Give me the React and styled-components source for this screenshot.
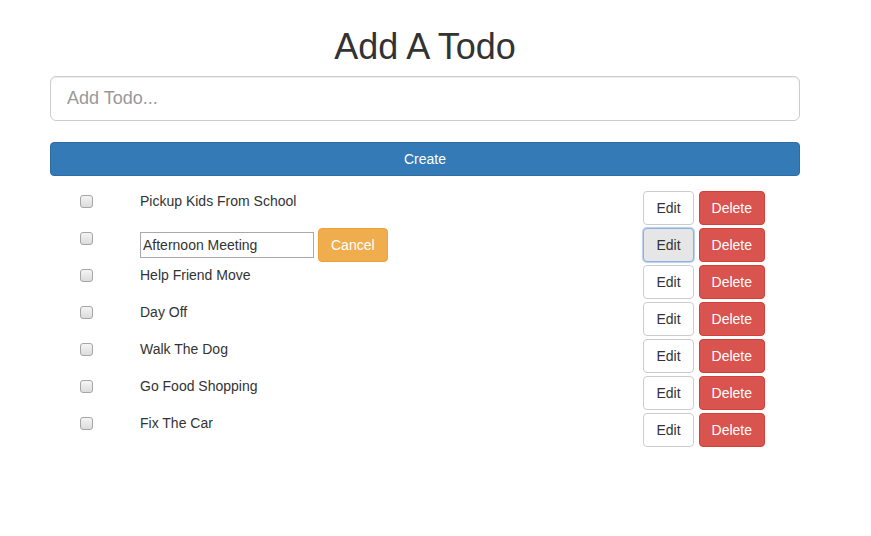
import React, {useState} from 'react';
import styled, {createGlobalStyle, css} from "styled-components";

const GlobalStyle = createGlobalStyle`
    body {
        margin: 0;
        background: #fff;
        font-family: "Liberation Sans", Arial, sans-serif;
        font-size: 14px;
        line-height: 20px;
        color: #333;
    }
    * {
        box-sizing: border-box;
    }
`;

const Container = styled.div`
    width: 750px;
    margin-left: 50px;
`;

const Title = styled.h1`
    margin: 27px 0 9px;
    font-size: 36px;
    font-weight: 400;
    line-height: 1.1;
    text-align: center;
    color: #333;
`;

const TodoInput = styled.input`
    display: block;
    width: 100%;
    height: 45px;
    padding: 10px 16px;
    font-family: inherit;
    font-size: 18px;
    color: #555;
    border: 1px solid #ccc;
    border-radius: 6px;
    box-shadow: inset 0 1px 1px rgba(0, 0, 0, .075);
    outline: none;

    &::placeholder {
        color: #999;
    }
`;

const CreateButton = styled.button`
    display: block;
    width: 100%;
    height: 34px;
    margin-top: 21px;
    font-family: inherit;
    font-size: 14px;
    color: #fff;
    background: #337ab7;
    border: 1px solid #2e6da4;
    border-radius: 4px;
`;

const List = styled.div`
    display: flex;
    flex-direction: column;
    gap: 3px;
    margin-top: 15px;
`;

const Row = styled.div`
    display: grid;
    grid-template-columns: 60px 1fr auto;
    align-items: start;
    padding: 0 35px 0 30px;
    min-height: 34px;
`;

const Check = styled.input.attrs({type: "checkbox"})`
    appearance: none;
    width: 13px;
    height: 13px;
    margin: 4px 0 0;
    border: 1px solid #a6a6a6;
    border-radius: 3px;
    background: linear-gradient(#f4f4f4, #dcdcdc);
`;

const Label = styled.span`
    line-height: 20px;
`;

const EditArea = styled.div`
    display: flex;
    align-items: center;
    gap: 4px;
`;

const EditInput = styled.input`
    width: 174px;
    height: 26px;
    padding: 1px 2px;
    font-family: inherit;
    font-size: 14px;
    color: #333;
    border: 1px solid #a9a9a9;
    outline: none;
`;

const Actions = styled.div`
    display: flex;
    gap: 5px;
`;

const variants = {
    default: css`
        color: #333;
        background: #fff;
        border-color: #ccc;
    `,
    focused: css`
        color: #333;
        background: #e6e6e6;
        border-color: #8fb0dc;
        box-shadow: 0 0 1px 1px rgba(102, 148, 214, .45);
    `,
    danger: css`
        color: #fff;
        background: #d9534f;
        border-color: #d43f3a;
    `,
    warning: css`
        color: #fff;
        background: #f0ad4e;
        border-color: #eea236;
    `,
};

const Button = styled.button`
    height: 34px;
    padding: 6px 12px;
    font-family: inherit;
    font-size: 14px;
    line-height: 20px;
    border: 1px solid;
    border-radius: 4px;
    ${({$variant}) => variants[$variant || "default"]}
`;

const todos = [
    "Pickup Kids From School",
    "Afternoon Meeting",
    "Help Friend Move",
    "Day Off",
    "Walk The Dog",
    "Go Food Shopping",
    "Fix The Car",
];

const App = () => {
    const [editing] = useState(1);

    return (
        <Container>
            <GlobalStyle/>
            <Title>Add A Todo</Title>
            <TodoInput placeholder="Add Todo..."/>
            <CreateButton>Create</CreateButton>
            <List>
                {todos.map((todo, i) => (
                    <Row key={todo}>
                        <Check/>
                        {i === editing ? (
                            <EditArea>
                                <EditInput defaultValue={todo}/>
                                <Button $variant="warning">Cancel</Button>
                            </EditArea>
                        ) : (
                            <Label>{todo}</Label>
                        )}
                        <Actions>
                            <Button $variant={i === editing ? "focused" : "default"}>Edit</Button>
                            <Button $variant="danger">Delete</Button>
                        </Actions>
                    </Row>
                ))}
            </List>
        </Container>
    )
};

export default App;
